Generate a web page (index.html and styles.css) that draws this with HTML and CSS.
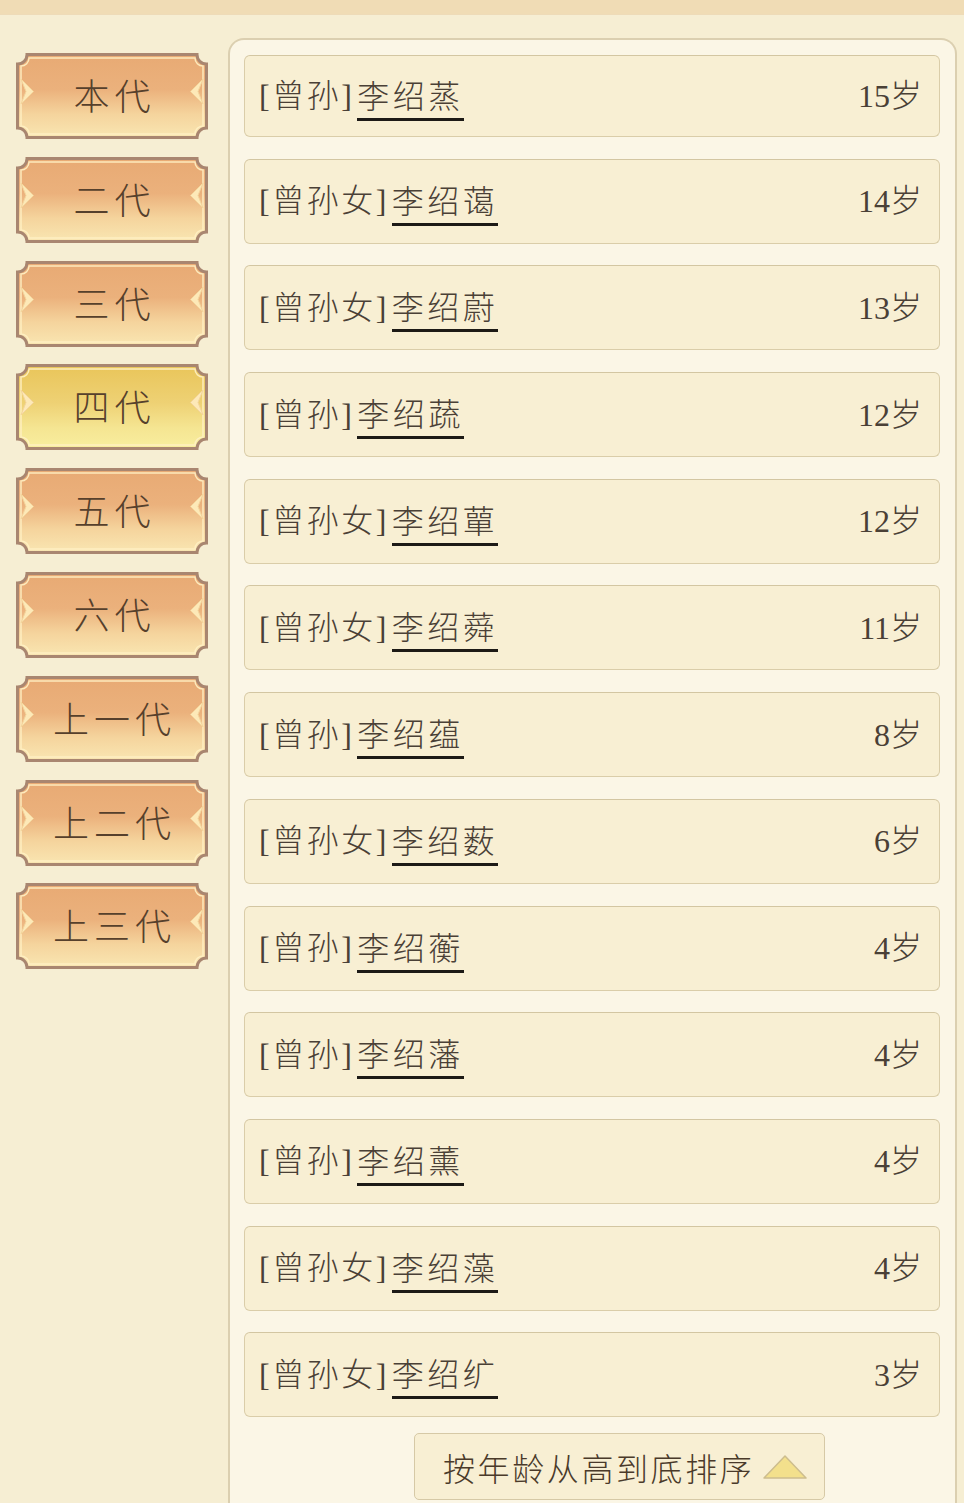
FILE: index.html
```html
<!DOCTYPE html>
<html lang="zh">
<head>
<meta charset="utf-8">
<link rel="stylesheet" href="styles.css">
</head>
<body>
<svg class="defs" width="0" height="0" aria-hidden="true">
  <defs>
    <linearGradient id="gOrange" x1="0" y1="0" x2="0" y2="1">
      <stop offset="0" stop-color="#e8aa74"/>
      <stop offset="0.42" stop-color="#ebb17c"/>
      <stop offset="0.72" stop-color="#f5d49d"/>
      <stop offset="1" stop-color="#f9e6b2"/>
    </linearGradient>
    <linearGradient id="gYellow" x1="0" y1="0" x2="0" y2="1">
      <stop offset="0" stop-color="#e9c55a"/>
      <stop offset="0.45" stop-color="#eed174"/>
      <stop offset="0.75" stop-color="#f5e592"/>
      <stop offset="1" stop-color="#f8ee9f"/>
    </linearGradient>
    <symbol id="tabshape" viewBox="0 0 192 86">
      <path d="M11,1.5 H181 A9.5,9.5 0 0 0 190.5,11 V75 A9.5,9.5 0 0 0 181,84.5 H11 A9.5,9.5 0 0 0 1.5,75 V11 A9.5,9.5 0 0 0 11,1.5 Z" fill="inherit" stroke="#a98670" stroke-width="3"/>
      <path d="M13,5 H179 A8,8 0 0 0 187,13 V73 A8,8 0 0 0 179,81 H13 A8,8 0 0 0 5,73 V13 A8,8 0 0 0 13,5 Z" fill="none" stroke="#fff1c4" stroke-width="1.5" opacity="0.9"/>
      <path d="M5,26 L17.5,38.5 L5,51 L10,38.5 Z" fill="#fde9b8" stroke="#f4d59c" stroke-width="1"/>
      <path d="M187,26 L174.5,38.5 L187,51 L182,38.5 Z" fill="#fde9b8" stroke="#f4d59c" stroke-width="1"/>
    </symbol>
  </defs>
</svg>

<div class="topbar"></div>
<div class="main">
  <nav class="tabs">
    <div class="tab"><svg class="tab-bg" viewBox="0 0 192 86" preserveAspectRatio="none"><use href="#tabshape" fill="url(#gOrange)"/></svg><span class="tab-label">本代</span></div>
    <div class="tab"><svg class="tab-bg" viewBox="0 0 192 86" preserveAspectRatio="none"><use href="#tabshape" fill="url(#gOrange)"/></svg><span class="tab-label">二代</span></div>
    <div class="tab"><svg class="tab-bg" viewBox="0 0 192 86" preserveAspectRatio="none"><use href="#tabshape" fill="url(#gOrange)"/></svg><span class="tab-label">三代</span></div>
    <div class="tab active"><svg class="tab-bg" viewBox="0 0 192 86" preserveAspectRatio="none"><use href="#tabshape" fill="url(#gYellow)"/></svg><span class="tab-label">四代</span></div>
    <div class="tab"><svg class="tab-bg" viewBox="0 0 192 86" preserveAspectRatio="none"><use href="#tabshape" fill="url(#gOrange)"/></svg><span class="tab-label">五代</span></div>
    <div class="tab"><svg class="tab-bg" viewBox="0 0 192 86" preserveAspectRatio="none"><use href="#tabshape" fill="url(#gOrange)"/></svg><span class="tab-label">六代</span></div>
    <div class="tab"><svg class="tab-bg" viewBox="0 0 192 86" preserveAspectRatio="none"><use href="#tabshape" fill="url(#gOrange)"/></svg><span class="tab-label">上一代</span></div>
    <div class="tab"><svg class="tab-bg" viewBox="0 0 192 86" preserveAspectRatio="none"><use href="#tabshape" fill="url(#gOrange)"/></svg><span class="tab-label">上二代</span></div>
    <div class="tab"><svg class="tab-bg" viewBox="0 0 192 86" preserveAspectRatio="none"><use href="#tabshape" fill="url(#gOrange)"/></svg><span class="tab-label">上三代</span></div>
  </nav>

  <section class="panel">
    <ul class="list">
      <li class="row"><span class="who"><span class="rel">[曾孙]</span><span class="name">李绍蒸</span></span><span class="age">15岁</span></li>
      <li class="row"><span class="who"><span class="rel">[曾孙女]</span><span class="name">李绍蔼</span></span><span class="age">14岁</span></li>
      <li class="row"><span class="who"><span class="rel">[曾孙女]</span><span class="name">李绍蔚</span></span><span class="age">13岁</span></li>
      <li class="row"><span class="who"><span class="rel">[曾孙]</span><span class="name">李绍蔬</span></span><span class="age">12岁</span></li>
      <li class="row"><span class="who"><span class="rel">[曾孙女]</span><span class="name">李绍蕇</span></span><span class="age">12岁</span></li>
      <li class="row"><span class="who"><span class="rel">[曾孙女]</span><span class="name">李绍蕣</span></span><span class="age">11岁</span></li>
      <li class="row"><span class="who"><span class="rel">[曾孙]</span><span class="name">李绍蕴</span></span><span class="age">8岁</span></li>
      <li class="row"><span class="who"><span class="rel">[曾孙女]</span><span class="name">李绍薮</span></span><span class="age">6岁</span></li>
      <li class="row"><span class="who"><span class="rel">[曾孙]</span><span class="name">李绍蘅</span></span><span class="age">4岁</span></li>
      <li class="row"><span class="who"><span class="rel">[曾孙]</span><span class="name">李绍藩</span></span><span class="age">4岁</span></li>
      <li class="row"><span class="who"><span class="rel">[曾孙]</span><span class="name">李绍薰</span></span><span class="age">4岁</span></li>
      <li class="row"><span class="who"><span class="rel">[曾孙女]</span><span class="name">李绍藻</span></span><span class="age">4岁</span></li>
      <li class="row"><span class="who"><span class="rel">[曾孙女]</span><span class="name">李绍纩</span></span><span class="age">3岁</span></li>
    </ul>
    <button class="sort">按年龄从高到底排序<svg class="tri" viewBox="0 0 44 24" width="44" height="24"><path d="M22,1 L43,23 H1 Z" fill="#f3e08c" stroke="#cdbd8e" stroke-width="1.5" stroke-linejoin="round"/></svg></button>
  </section>
</div>
</body>
</html>
```

FILE: styles.css
```css
html, body {
  margin: 0;
  padding: 0;
}
body {
  width: 964px;
  height: 1503px;
  overflow: hidden;
  background: #f6eed3;
  font-family: "Liberation Serif", "Noto Sans CJK SC", serif;
  color: #4a4036;
}
.defs {
  position: absolute;
  width: 0;
  height: 0;
}
.topbar {
  height: 15px;
  background: #f0dcb5;
  border-bottom: 1px solid #eedbb8;
  box-sizing: border-box;
}
.main {
  display: flex;
  align-items: flex-start;
}
.tabs {
  width: 212px;
  padding: 38px 0 0 16px;
  display: flex;
  flex-direction: column;
  gap: 17.8px;
}
.tab {
  position: relative;
  width: 192px;
  height: 86px;
  display: flex;
  align-items: center;
  justify-content: center;
}
.tab-bg {
  position: absolute;
  inset: 0;
  width: 100%;
  height: 100%;
}
.tab-label {
  position: relative;
  font-family: "Noto Sans CJK SC", sans-serif;
  font-weight: 300;
  font-size: 36px;
  letter-spacing: 5px;
  padding-left: 5px;
  color: #56402c;
  line-height: 1;
  margin-top: -4px;
}
.panel {
  margin-top: 23px;
  width: 729px;
  height: 1600px;
  box-sizing: border-box;
  background: #fbf6e6;
  border: 2px solid #dbcfb0;
  border-bottom: none;
  border-radius: 16px 16px 0 0;
  padding: 15px 15px 0 14px;
}
.list {
  list-style: none;
  margin: 0;
  padding: 0;
  display: flex;
  flex-direction: column;
  gap: 21.7px;
}
.row {
  height: 85px;
  box-sizing: border-box;
  background: #f8efd3;
  border: 1.5px solid #dacda9;
  border-top-color: #d3c6a2;
  border-radius: 6px;
  display: flex;
  align-items: center;
  justify-content: space-between;
  padding: 0 17px 0 14px;
  font-size: 32px;
  line-height: 1;
}
.row:first-child {
  height: 82px;
}
.who {
  display: flex;
  align-items: center;
}
.rel, .name {
  font-weight: 300;
}
.rel {
  letter-spacing: 2.5px;
  margin-right: 3px;
}
.name {
  display: inline-block;
  letter-spacing: 3.5px;
  padding: 0 0 5px;
  border-bottom: 3px solid #1d1a16;
  margin-top: 9px;
}
.age {
  font-weight: 300;
  letter-spacing: 0;
}
.sort {
  margin: 16px 0 0 170px;
  width: 411px;
  height: 67px;
  box-sizing: border-box;
  background: #f8efd3;
  border: 1.5px solid #d6c9a6;
  border-radius: 5px;
  display: flex;
  align-items: center;
  padding: 0 0 0 28px;
  font-family: "Noto Sans CJK SC", sans-serif;
  font-weight: 300;
  font-size: 32px;
  letter-spacing: 2.6px;
  color: #4a3a2a;
}
.tri {
  margin-left: 9px;
}
```
